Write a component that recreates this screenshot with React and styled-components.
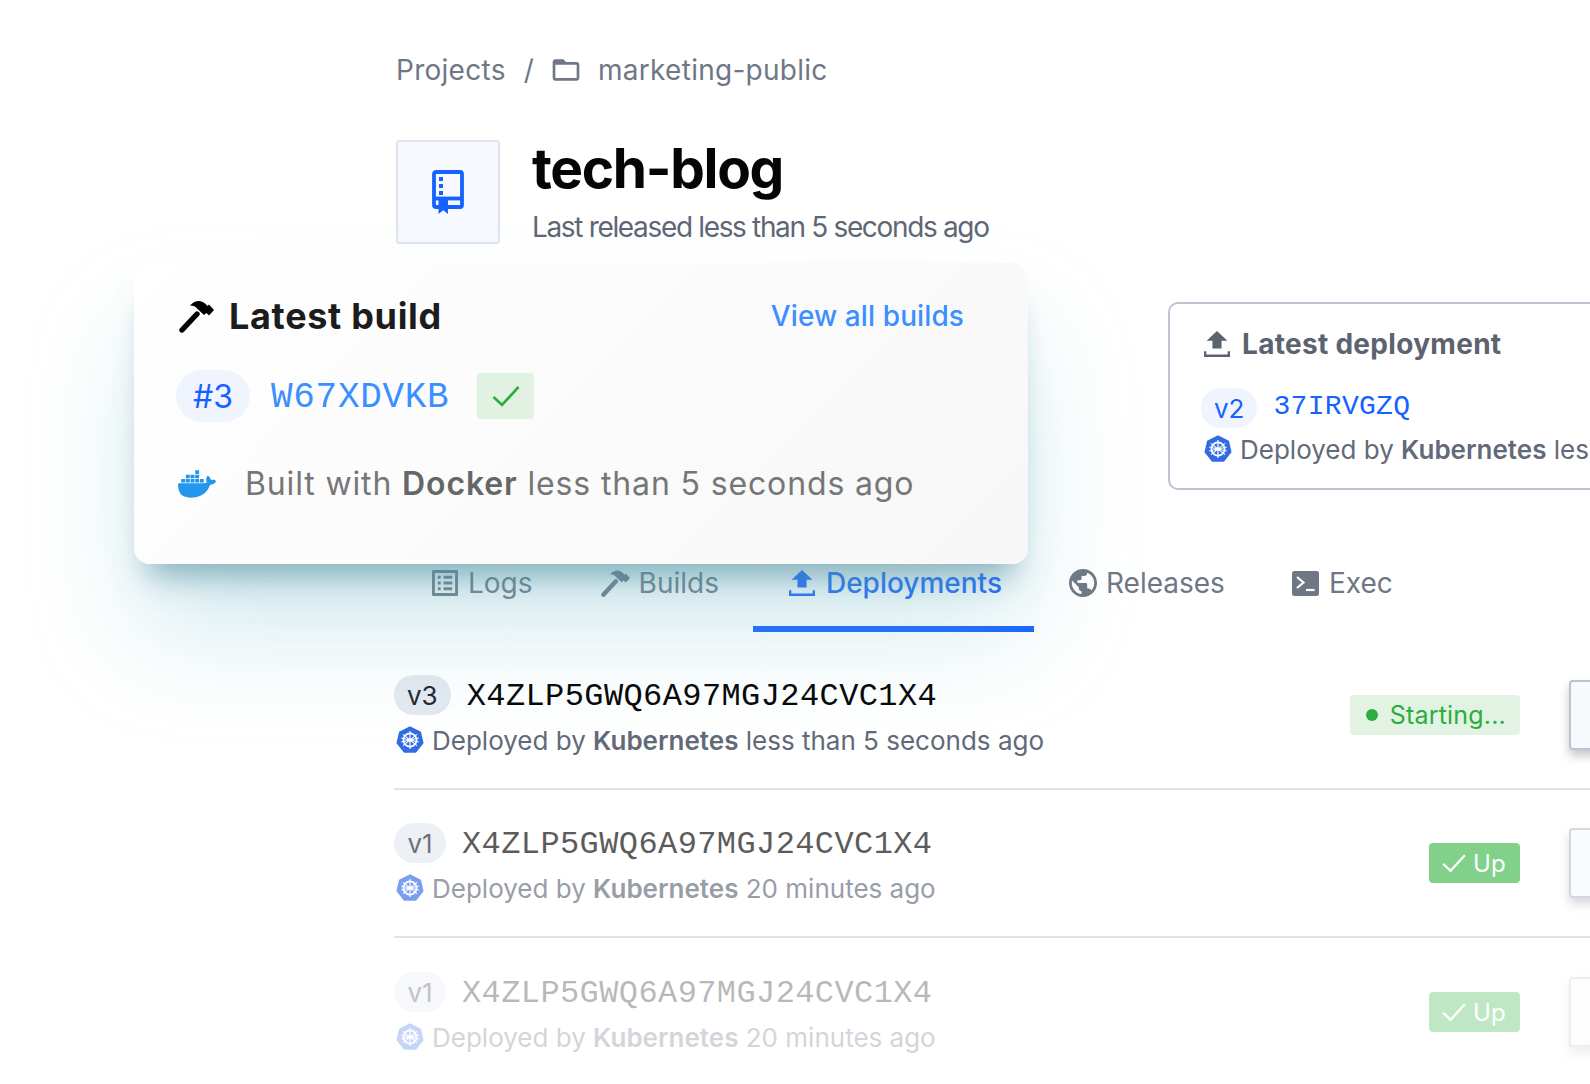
import React from "react";
import styled, { createGlobalStyle } from "styled-components";
import { SiDocker } from "react-icons/si";

const GlobalStyle = createGlobalStyle`
  html, body { margin: 0; padding: 0; background: #fff; }
  body { font-family: Inter, "Noto Sans", sans-serif; -webkit-font-smoothing: antialiased; }
`;

const MONO = `"Liberation Mono", "DejaVu Sans Mono", monospace`;

const Hammer = ({ size = 36 }) => (
  <svg width={size} height={size} viewBox="0 0 36 36" fill="currentColor">
    <path d="M4 32 L19 16" stroke="currentColor" strokeWidth="5.4" strokeLinecap="round" />
    <path d="M12 7.5 C17 2 23 2 27 5.5 L29.5 8 L31 6.500 L36 12 L31 17.500 L28.500 15 L26 17 L19 10.500 C18 8.500 15 7.500 12 7.500Z" />
  </svg>
);

const Upload = () => (
  <svg width="26" height="26" viewBox="2 1.500 20 20" fill="currentColor">
    <path d="M8.500 15h7v-6h4.500L12 1.500 4 9h4.500z" />
    <path d="M2 17v4.500h20V17h-1.800v2.600H3.800V17z" />
  </svg>
);

const ListAlt = () => (
  <svg width="26" height="26" viewBox="3 3 18 18" fill="currentColor">
    <path d="M19 5v14H5V5h14m1.100-2H3.900c-.5 0-.9.4-.9.9v16.200c0 .4.4.9.9.9h16.200c.4 0 .9-.5.9-.9V3.900c0-.5-.5-.9-.9-.9zM11 7h6v2h-6V7zm0 4h6v2h-6v-2zm0 4h6v2h-6zM7 7h2v2H7zm0 4h2v2H7zm0 4h2v2H7z" />
  </svg>
);

const Globe = () => (
  <svg width="28" height="28" viewBox="2 2 20 20" fill="currentColor">
    <path d="M12 2C6.480 2 2 6.480 2 12s4.480 10 10 10 10-4.480 10-10S17.520 2 12 2zm-1 17.930c-3.950-.49-7-3.850-7-7.930 0-.62.08-1.210.21-1.790L9 15v1c0 1.100.9 2 2 2v1.930zm6.900-2.540c-.26-.81-1-1.390-1.900-1.390h-1v-3c0-.55-.45-1-1-1H8v-2h2c.55 0 1-.45 1-1V7h2c1.100 0 2-.9 2-2v-.41c2.930 1.190 5 4.060 5 7.410 0 2.080-.8 3.970-2.100 5.390z" />
  </svg>
);

const Terminal = () => (
  <svg width="27" height="25" viewBox="0 0 27 25">
    <rect width="27" height="25" rx="2.500" fill="currentColor" />
    <path d="M5 6 L11.500 11.500 L5 17" fill="none" stroke="#fff" strokeWidth="2.200" />
    <path d="M14 19h8.500" stroke="#fff" strokeWidth="2.200" />
  </svg>
);

const Folder = () => (
  <svg width="32" height="32" viewBox="0 0 24 24" fill="currentColor">
    <path d="M20 6h-8l-2-2H4c-1.100 0-1.990.9-1.990 2L2 18c0 1.100.9 2 2 2h16c1.100 0 2-.9 2-2V8c0-1.100-.9-2-2-2zm0 12H4V8h16v10z" />
  </svg>
);

const BookIcon = () => (
  <svg width="32" height="44" viewBox="0 0 32 44" fill="none">
    <path d="M4 2h24a2 2 0 0 1 2 2v31a2 2 0 0 1-2 2H4a2 2 0 0 1-2-2V4a2 2 0 0 1 2-2z" stroke="#1662ff" strokeWidth="3.800" />
    <path d="M2 28.500h28" stroke="#1662ff" strokeWidth="3.800" />
    <path d="M7 7h4v4H7zM7 14h4v4H7zM7 21h4v4H7z" fill="#1662ff" />
    <path d="M6.500 28h9.500v16l-4.750-3.700L6.500 44z" fill="#1662ff" />
  </svg>
);

const Kube = () => (
  <svg width="28" height="28" viewBox="0 0 28 28">
    <path d="M14 1.500 L24 6.300 L26.500 17 L19.600 25.700 L8.400 25.700 L1.500 17 L4 6.300Z" fill="#326ce5" stroke="#326ce5" strokeWidth="2" strokeLinejoin="round" />
    <circle cx="14" cy="14" r="6.600" fill="none" stroke="#fff" strokeWidth="1.700" />
    <circle cx="14" cy="14" r="1.800" fill="#fff" />
    <path d="M14 5V23M7 8.400L21 19.600M21 8.400L7 19.600M5.200 16L22.800 12M22.800 16L5.200 12" stroke="#fff" strokeWidth="1.200" />
  </svg>
);

const Check = ({ size = 30, width = 2.600 }) => (
  <svg width={size} height={size} viewBox="0 0 30 30" fill="none">
    <path d="M2.500 16 L11 24 L27.500 6" stroke="currentColor" strokeWidth={width} />
  </svg>
);

const Page = styled.div`
  position: relative;
  width: 1590px;
  height: 1084px;
  overflow: hidden;
  box-sizing: border-box;
  padding: 51px 0 0 396px;
  background: #fff;
`;

const Breadcrumb = styled.nav`
  display: flex;
  align-items: center;
  height: 38px;
  font-size: 28px;
  color: #6f7785;
  letter-spacing: 0.27px;
`;

const Slash = styled.span`
  margin: 0 16px 0 18px;
`;

const FolderWrap = styled.span`
  display: flex;
  margin-right: 16px;
  color: #6f7785;
`;

const Header = styled.header`
  display: flex;
  gap: 32px;
  margin-top: 51px;
  height: 104px;
`;

const IconBox = styled.div`
  box-sizing: border-box;
  width: 104px;
  height: 104px;
  display: flex;
  align-items: center;
  justify-content: center;
  background: #f6f9fd;
  border: 2px solid #dfe4eb;
  border-radius: 3px;
`;

const TitleCol = styled.div`
  display: flex;
  flex-direction: column;
  margin-top: -2px;
`;

const Title = styled.h1`
  margin: 0;
  font-size: 55px;
  line-height: 60px;
  font-weight: 700;
  letter-spacing: -1.300px;
  color: #050505;
`;

const Subtitle = styled.p`
  margin: 12px 0 0;
  font-size: 28px;
  line-height: 34px;
  letter-spacing: -1.340px;
  color: #5f6776;
`;

const FloatCard = styled.section`
  position: absolute;
  z-index: 2;
  left: 134px;
  top: 263px;
  box-sizing: border-box;
  width: 894px;
  height: 301px;
  padding: 30px 64px 0 44px;
  border-radius: 16px;
  background: linear-gradient(135deg, #ffffff 0%, #f7f7f7 100%);
  box-shadow: 0 26px 30px -14px rgba(70, 130, 150, 0.55), 0 70px 110px -10px rgba(120, 190, 205, 0.36);
`;

const FloatHead = styled.div`
  display: flex;
  align-items: center;
  justify-content: space-between;
  height: 46px;
`;

const FloatTitle = styled.h2`
  display: flex;
  align-items: center;
  gap: 15px;
  margin: 0;
  font-size: 36px;
  font-weight: 700;
  letter-spacing: 0.68px;
  color: #1c1c1c;
  svg { color: #000; }
`;

const Link = styled.a`
  font-size: 28px;
  font-weight: 500;
  color: #3b8fff;
  letter-spacing: 0.1px;
`;

const BuildRow = styled.div`
  display: flex;
  align-items: center;
  margin: 31px 0 0 -2px;
  height: 52px;
`;

const Pill = styled.span`
  display: inline-flex;
  align-items: center;
  justify-content: center;
  box-sizing: border-box;
  height: ${(p) => (p.$large ? 52 : 40)}px;
  min-width: ${(p) => (p.$large ? 74 : 52)}px;
  padding: 0 ${(p) => (p.$large ? 16 : 13)}px;
  border-radius: 26px;
  font-size: ${(p) => (p.$large ? 32 : 26)}px;
  font-weight: 400;
  background: ${(p) => p.$bg || "#eff4ff"};
  color: ${(p) => p.$color || "#1662ff"};
`;

const Hash = styled.span`
  font-family: ${MONO};
  font-size: ${(p) => p.$size}px;
  letter-spacing: ${(p) => p.$spacing}px;
  color: ${(p) => p.$color};
  margin-left: ${(p) => p.$left}px;
  padding-top: ${(p) => p.$drop || 0}px;
  padding-bottom: ${(p) => p.$raise || 0}px;
`;

const CheckTile = styled.span`
  display: flex;
  align-items: center;
  justify-content: center;
  width: 57px;
  height: 46px;
  margin-left: 28px;
  border-radius: 4px;
  background: #e1f1e2;
  color: #2bae3f;
`;

const BuiltRow = styled.div`
  display: flex;
  align-items: center;
  gap: 29px;
  margin-top: 42px;
  font-size: 32px;
  letter-spacing: 0.86px;
  color: #767676;
  b { font-weight: 600; color: #666; }
  svg { color: #2396ed; flex: none; }
`;

const DeployCard = styled.section`
  box-sizing: border-box;
  width: 700px;
  height: 188px;
  margin: 58px 0 0 772px;
  padding: 22px 0 0 34px;
  border: 2px solid #bcc3d1;
  border-right: 0;
  border-radius: 10px 0 0 10px;
  color: #5c6370;
`;

const DeployTitle = styled.h3`
  display: flex;
  align-items: center;
  gap: 12px;
  margin: 0;
  height: 36px;
  font-size: 28px;
  font-weight: 700;
  letter-spacing: 0.3px;
  color: #5c6370;
`;

const HashLine = styled.div`
  display: flex;
  align-items: center;
  height: 40px;
  margin-top: ${(p) => p.$top || 0}px;
  margin-left: ${(p) => p.$left || 0}px;
`;

const ByLine = styled.div`
  display: flex;
  align-items: center;
  gap: ${(p) => p.$gap || 8}px;
  height: 30px;
  margin-top: ${(p) => p.$top || 10}px;
  padding-left: ${(p) => p.$indent || 0}px;
  font-size: 26px;
  white-space: nowrap;
  color: #626a79;
  b { font-weight: 600; }
  svg { flex: none; }
`;

const Tabs = styled.nav`
  display: flex;
  align-items: flex-start;
  height: 82px;
  margin-top: 60px;
`;

const Tab = styled.div`
  box-sizing: border-box;
  display: flex;
  align-items: center;
  gap: ${(p) => p.$gap ?? 10}px;
  height: 82px;
  padding: 0 ${(p) => p.$end ?? 32}px 10px ${(p) => p.$start ?? 36}px;
  font-size: 28px;
  color: ${(p) => (p.$active ? "#1662ff" : "#6f7785")};
  border-bottom: 6px solid ${(p) => (p.$active ? "#1662ff" : "transparent")};
  font-weight: ${(p) => (p.$active ? 500 : 400)};
`;

const Rows = styled.div`
  width: 1255px;
  margin: 10px 0 0 -2px;
`;

const Row = styled.article`
  box-sizing: border-box;
  display: flex;
  align-items: center;
  height: 148px;
  border-bottom: ${(p) => (p.$last ? "none" : "2px solid #dfe2e8")};
`;

const RowContent = styled.div`
  flex: 1;
  opacity: ${(p) => p.$fade};
`;

const Badge = styled.span`
  display: flex;
  align-items: center;
  box-sizing: border-box;
  height: 40px;
  padding: ${(p) => (p.$up ? "0 14px 0 12px" : "0 14px 0 16px")};
  gap: ${(p) => (p.$up ? 6 : 10)}px;
  border-radius: 4px;
  font-size: ${(p) => (p.$up ? 24 : 25)}px;
  letter-spacing: 0.2px;
  background: ${(p) => (p.$up ? "#82d18a" : "#e2f3e3")};
  color: ${(p) => (p.$up ? "#fff" : "#2bae3f")};
  opacity: ${(p) => p.$fade};
`;

const Dot = styled.i`
  width: 12px;
  height: 12px;
  border-radius: 50%;
  background: #2bae3f;
  margin-right: 2px;
`;

const RowButton = styled.div`
  box-sizing: border-box;
  flex: none;
  width: 80px;
  height: 70px;
  margin-left: 49px;
  border: 2px solid #bcc3d1;
  border-radius: 4px;
  background: #f8f9fc;
  box-shadow: 0 6px 10px rgba(60, 70, 90, 0.3);
  opacity: ${(p) => p.$fade};
`;

const rows = [
  { v: "v3", fade: 1, when: "less than 5 seconds ago" },
  { v: "v1", fade: 0.65, up: true, badgeFade: 1, when: "20 minutes ago" },
  { v: "v1", fade: 0.28, up: true, badgeFade: 0.5, when: "20 minutes ago", last: true },
];

export default function App() {
  return (
    <Page>
      <GlobalStyle />
      <Breadcrumb>
        Projects
        <Slash>/</Slash>
        <FolderWrap><Folder /></FolderWrap>
        marketing-public
      </Breadcrumb>

      <Header>
        <IconBox><BookIcon /></IconBox>
        <TitleCol>
          <Title>tech-blog</Title>
          <Subtitle>Last released less than 5 seconds ago</Subtitle>
        </TitleCol>
      </Header>

      <FloatCard>
        <FloatHead>
          <FloatTitle><Hammer />Latest build</FloatTitle>
          <Link>View all builds</Link>
        </FloatHead>
        <BuildRow>
          <Pill $large>#3</Pill>
          <Hash $size={36} $spacing={0.7} $color="#3b8fff" $left={21} $drop={3}>W67XDVKB</Hash>
          <CheckTile><Check /></CheckTile>
        </BuildRow>
        <BuiltRow>
          <SiDocker size={38} />
          <span>Built with <b>Docker</b> less than 5 seconds ago</span>
        </BuiltRow>
      </FloatCard>

      <DeployCard>
        <DeployTitle><Upload />Latest deployment</DeployTitle>
        <HashLine $top={26} $left={-3}>
          <Pill>v2</Pill>
          <Hash $size={28} $spacing={0.3} $color="#1662ff" $left={16} $raise={3}>37IRVGZQ</Hash>
        </HashLine>
        <ByLine $top={6}>
          <Kube />
          <span>Deployed by <b>Kubernetes</b> less than 5 seconds ago</span>
        </ByLine>
      </DeployCard>

      <Tabs>
        <Tab><ListAlt />Logs</Tab>
        <Tab $start={35} $gap={9} $end={34}><Hammer size={30} />Builds</Tab>
        <Tab $active $gap={11}><Upload />Deployments</Tab>
        <Tab $start={35} $gap={9}><Globe />Releases</Tab>
        <Tab $start={35}><Terminal />Exec</Tab>
      </Tabs>

      <Rows>
        {rows.map((r, i) => (
          <Row key={i} $last={r.last}>
            <RowContent $fade={r.fade}>
              <HashLine>
                <Pill $bg="#e4e9f1" $color="#1f2530">{r.v}</Pill>
                <Hash $size={32} $spacing={0.4} $color="#050505" $left={16} $drop={3}>X4ZLP5GWQ6A97MGJ24CVC1X4</Hash>
              </HashLine>
              <ByLine $indent={2}>
                <Kube />
                <span>Deployed by <b>Kubernetes</b> {r.when}</span>
              </ByLine>
            </RowContent>
            {r.up ? (
              <Badge $up $fade={r.badgeFade}><Check size={26} />Up</Badge>
            ) : (
              <Badge $fade={1}><Dot />Starting...</Badge>
            )}
            <RowButton $fade={r.fade} />
          </Row>
        ))}
      </Rows>
    </Page>
  );
}
